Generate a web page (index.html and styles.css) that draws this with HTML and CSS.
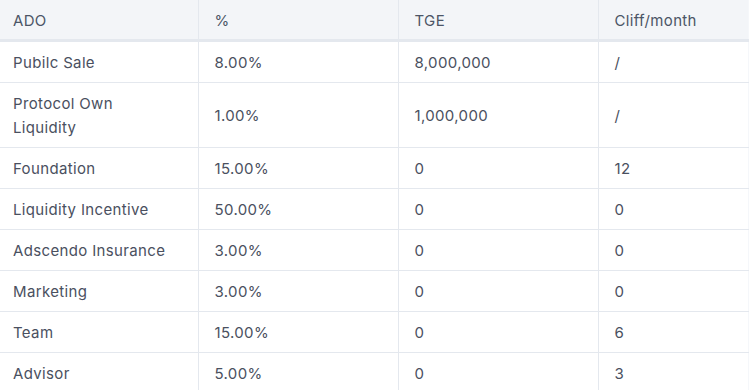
FILE: index.html
```html
<!DOCTYPE html>
<html>
<head>
<meta charset="utf-8">
<link rel="stylesheet" href="styles.css">
</head>
<body>
<table class="alloc">
  <colgroup>
    <col class="c1"><col class="c2"><col class="c3"><col class="c4">
  </colgroup>
  <thead>
    <tr><th>ADO</th><th>%</th><th>TGE</th><th>Cliff/month</th></tr>
  </thead>
  <tbody>
    <tr><td>Pubilc Sale</td><td>8.00%</td><td>8,000,000</td><td>/</td></tr>
    <tr><td>Protocol Own<br>Liquidity</td><td>1.00%</td><td>1,000,000</td><td>/</td></tr>
    <tr><td>Foundation</td><td>15.00%</td><td>0</td><td>12</td></tr>
    <tr><td>Liquidity Incentive</td><td>50.00%</td><td>0</td><td>0</td></tr>
    <tr><td>Adscendo Insurance</td><td>3.00%</td><td>0</td><td>0</td></tr>
    <tr><td>Marketing</td><td>3.00%</td><td>0</td><td>0</td></tr>
    <tr><td>Team</td><td>15.00%</td><td>0</td><td>6</td></tr>
    <tr><td>Advisor</td><td>5.00%</td><td>0</td><td>3</td></tr>
  </tbody>
</table>
</body>
</html>
```
FILE: styles.css
```css
html, body {
  margin: 0;
  padding: 0;
  background: #ffffff;
}
.alloc {
  width: 748px;
  border-collapse: collapse;
  table-layout: fixed;
  font-family: Inter, "Noto Sans", sans-serif;
  font-size: 15px;
  letter-spacing: 0.35px;
  color: #4a5060;
}
.c1 { width: 198px; }
.c2 { width: 200px; }
.c3 { width: 200px; }
.c4 { width: 150px; }
.alloc th {
  background: #f3f5f8;
  font-weight: 400;
  text-align: left;
  line-height: 23px;
  padding: 9px 16px 7px;
  border-right: 1px solid #e4e8ee;
  border-bottom: 3px solid #e4e8ee;
  color: #4c5566;
}
.alloc td {
  line-height: 24px;
  padding: 9px 16px 7px;
  border-right: 1px solid #e4e8ee;
  border-bottom: 1px solid #e4e8ee;
  vertical-align: middle;
}
.alloc th:first-child,
.alloc td:first-child {
  padding-left: 13px;
}
.alloc th:last-child,
.alloc td:last-child {
  border-right: 1px solid #f5f7fa;
}
```
